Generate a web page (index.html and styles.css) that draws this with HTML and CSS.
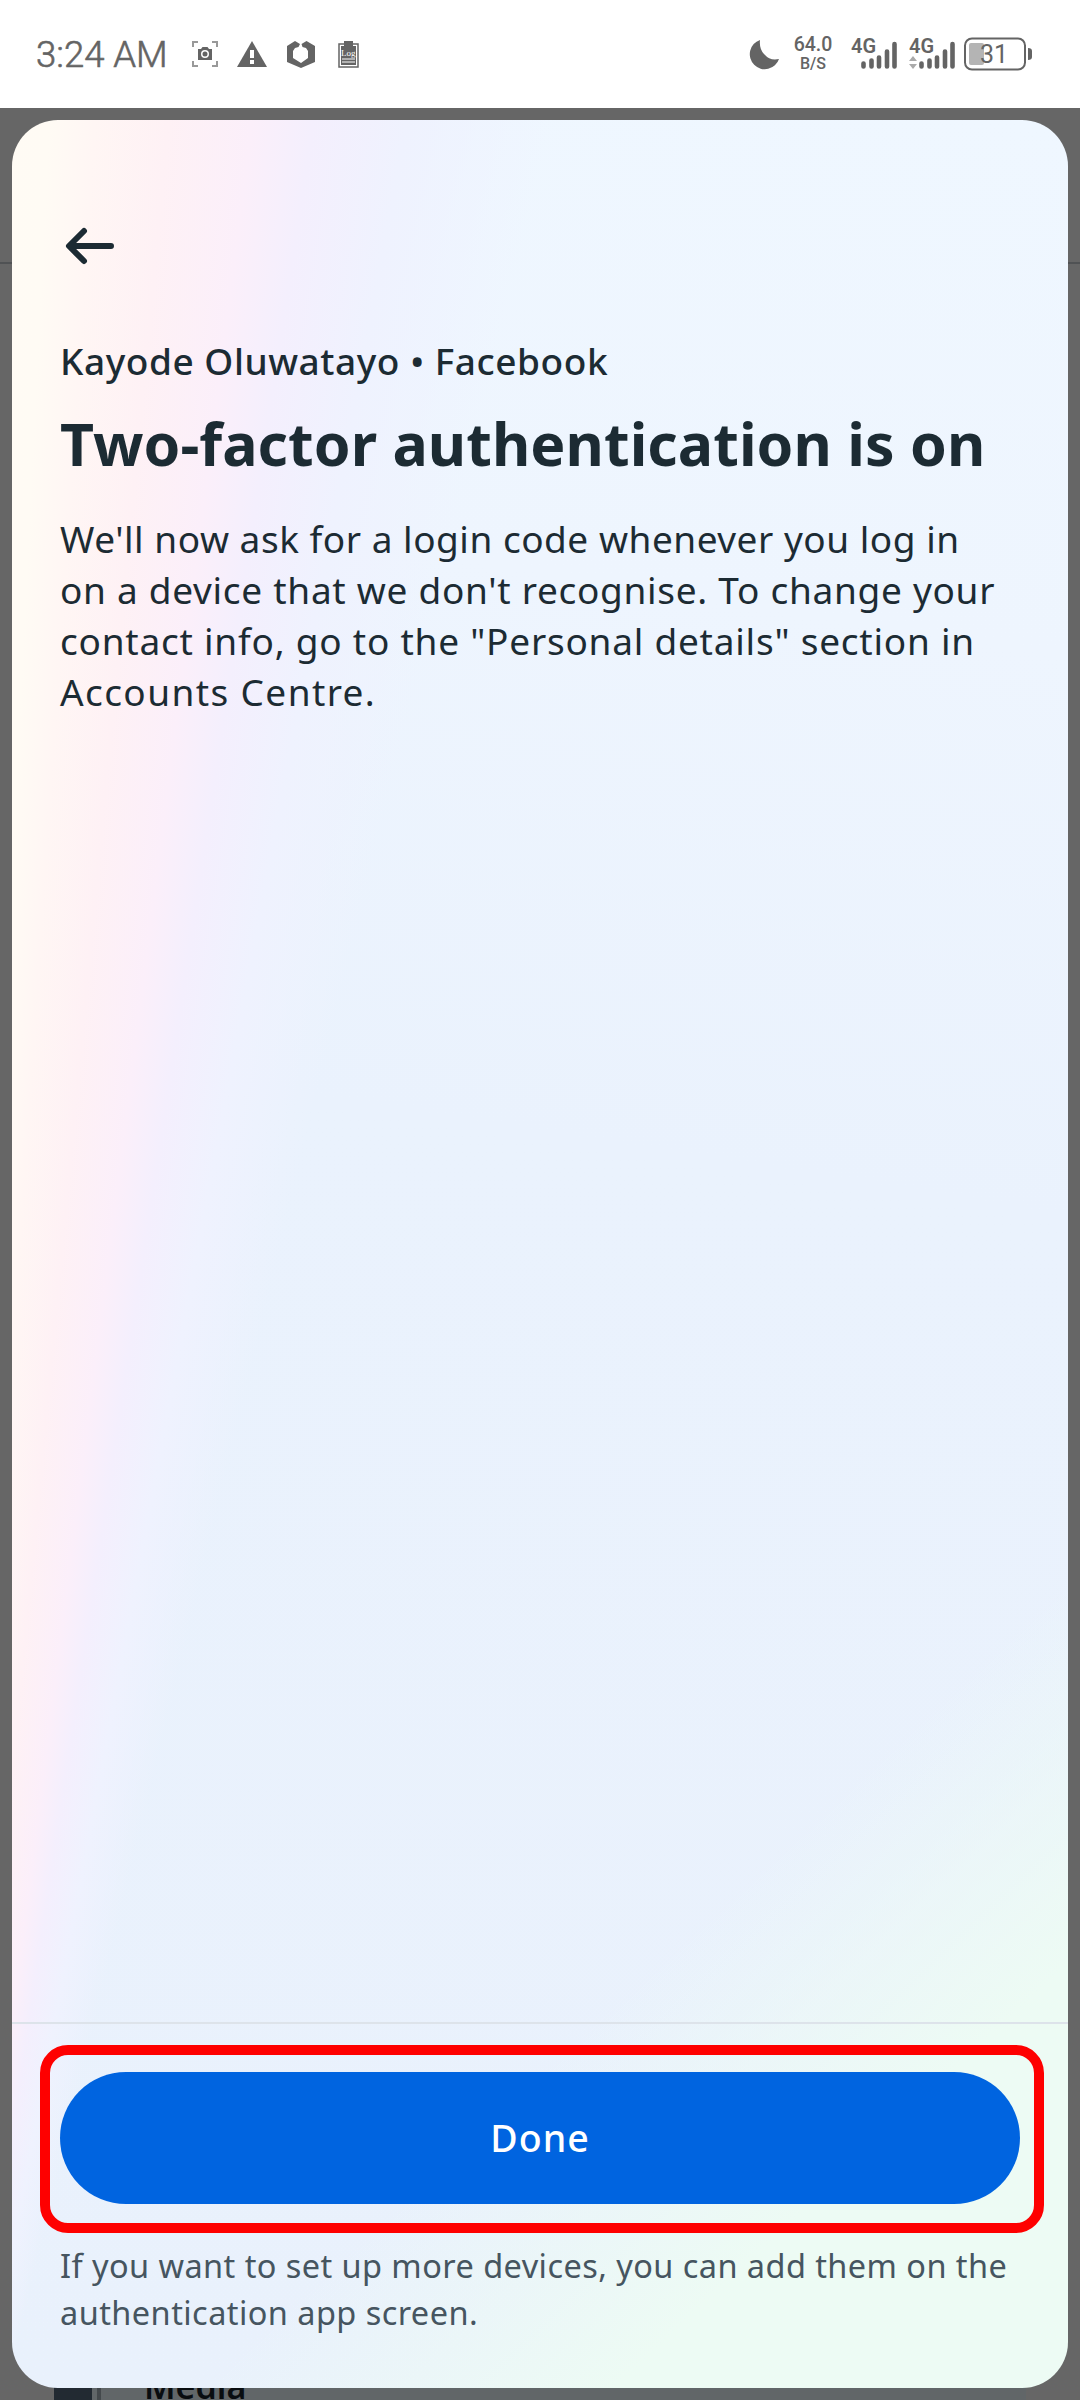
FILE: index.html
```html
<!DOCTYPE html>
<html lang="en-GB">
<head>
<meta charset="utf-8">
<title>Two-factor authentication</title>
<link rel="stylesheet" href="styles.css">
</head>
<body>
<div class="screen">
  <header class="status">
    <div class="status-left">
      <span class="clock">3:24 AM</span>
      <svg class="ic-shot" width="26" height="26" viewBox="0 0 26 26"><path d="M1 6V1h5M20 1h5v5M25 20v5h-5M6 25H1v-5" fill="none" stroke="#999" stroke-width="2"/><path fill-rule="evenodd" d="M6 8h3l1.500-2h5l1.500 2h3v11H6zM13 9a4 4 0 1 0 0 8 4 4 0 0 0 0-8zm0 1.500a2.500 2.500 0 1 1 0 5 2.500 2.500 0 0 1 0-5z" fill="#646464"/></svg>
      <svg class="ic-warn" width="30" height="26" viewBox="0 0 30 26"><path d="M15 0l15 26H0z" fill="#646464"/><path d="M13 9h4v8h-4zM13 19h4v4h-4z" fill="#fff"/></svg>
      <svg class="ic-hex" width="28" height="27" viewBox="0 0 28 27"><path d="M8 0l5 3-1.500 3L8 7l-2 3v7l8 5 7-5v-7l-2-3-3.500-1L14.500 3l5-3L28 5v16l-14 6L0 21V5z" fill="#646464"/></svg>
      <svg class="ic-log" width="21" height="27" viewBox="0 0 21 27"><path d="M1 3h19v23H1z" fill="#fff" stroke="#646464" stroke-width="1.500"/><path d="M3 5h15v19H3zM6 0h9v5H6z" fill="#646464"/><path d="M4 18h13M4 21h13" stroke="#fff"/><text x="3" y="15" class="log-label">Log</text></svg>
    </div>
    <div class="status-right">
      <svg class="ic-moon" width="31" height="31" viewBox="0 0 31 31"><path d="M11 1A15 15 0 1 0 30 20Q21 22 15.500 15.500Q10 10 11 1z" fill="#646464"/></svg>
      <div class="speed"><span class="rate">64.0</span><span class="unit">B/S</span></div>
      <svg class="ic-signal" width="47" height="38" viewBox="0 -4 47 38"><text x="0" y="15.500" class="net">4G</text><path d="M12.500 29.500v-3M20.500 29.500v-6M28 29.500v-9M36 29.500v-15M43.500 29.500V7" stroke="#646464" stroke-width="4.600" stroke-linecap="round"/></svg>
      <svg class="ic-signal-two" width="47" height="38" viewBox="0 -4 47 38"><text x="0" y="15.500" class="net">4G</text><path d="M4 19l4 5H0zM4 32l4-5H0z" fill="#aaa"/><path d="M12.500 29.500v-3M20.500 29.500v-6M28 29.500v-9M36 29.500v-15M43.500 29.500V7" stroke="#646464" stroke-width="4.600" stroke-linecap="round"/></svg>
      <svg class="ic-battery" width="69" height="34" viewBox="0 0 69 34"><rect x="1" y="1.500" width="60" height="31" rx="7" fill="none" stroke="#646464" stroke-width="2"/><rect x="5" y="6" width="15" height="22" rx="2" fill="#b4b4b4"/><path d="M64 11q4 0 4 3v6q0 3-4 3z" fill="#646464"/><text x="16" y="25.500" class="level">31</text></svg>
    </div>
  </header>
  <div class="backdrop">
    <div class="behind-top"></div>
    <div class="behind-row"><span class="thumb"></span><span class="thumb-edge"></span><span class="behind-text">Media</span></div>
    <main class="sheet">
      <section class="content">
        <svg class="back" width="50" height="38" viewBox="0 0 50 38"><path d="M46 19H5M19 4L4 19l15 15" fill="none" stroke="#1c2b33" stroke-width="6" stroke-linecap="round" stroke-linejoin="round"/></svg>
        <p class="account">Kayode Oluwatayo • Facebook</p>
        <h1 class="title">Two-factor authentication is on</h1>
        <p class="body">
          <span class="line b1">We'll now ask for a login code whenever you log in</span>
          <span class="line b2">on a device that we don't recognise. To change your</span>
          <span class="line b3">contact info, go to the "Personal details" section in</span>
          <span class="line b4">Accounts Centre.</span>
        </p>
      </section>
      <footer class="actions">
        <div class="highlight"><button class="done">Done</button></div>
        <p class="note">
          <span class="line n1">If you want to set up more devices, you can add them on the</span>
          <span class="line n2">authentication app screen.</span>
        </p>
      </footer>
    </main>
  </div>
</div>
</body>
</html>
```
FILE: styles.css
```css
* { box-sizing: border-box; }
body { margin: 0; font-family: "Noto Sans", sans-serif; color: #1c2b33; }
p, h1 { margin: 0; white-space: nowrap; }
svg { display: block; flex: none; }
.screen { width: 1080px; height: 2400px; display: flex; flex-direction: column; overflow: hidden; }

.status { height: 108px; flex: none; display: flex; justify-content: space-between; padding: 0 47px 0 36px; background: #fff; color: #646464; font-family: Roboto, sans-serif; }
.status-left, .status-right { display: flex; align-items: center; }
.clock { font-size: 36.500px; font-weight: 300; -webkit-text-stroke: 0.6px #646464; line-height: 42px; padding-top: 2px; width: 156px; white-space: nowrap; }
.ic-warn { margin-left: 19px; }
.ic-hex { margin-left: 20px; }
.ic-log { margin-left: 23px; }
.log-label { font: 9px "Liberation Serif", serif; fill: #fff; }
.speed { width: 40px; margin: 0 18px 0 13px; display: flex; flex-direction: column; align-items: center; }
.rate { font-size: 19.500px; font-weight: 500; line-height: 20px; }
.unit { font-size: 16px; font-weight: 500; line-height: 18px; }
.net { font: 600 20px Roboto, sans-serif; fill: #646464; }
.ic-signal, .ic-signal-two { margin-top: -4px; }
.ic-signal-two { margin-left: 11px; margin-right: 8px; }
.level { font: 25px Roboto, sans-serif; fill: #646464; }

.backdrop { position: relative; flex: 1; background: #666; padding: 12px; }
.behind-top { position: absolute; left: 0; right: 0; top: 0; height: 156px; border-bottom: 2px solid #505254; }
.behind-row { position: absolute; left: 54px; bottom: 0; height: 14px; width: 972px; display: flex; background: #616668; overflow: hidden; }
.thumb { width: 38px; background: #222a32; }
.thumb-edge { width: 4px; margin-left: 5px; background: #44494c; }
.behind-text { margin: -20px 0 0 43px; font-size: 34px; line-height: 40px; font-weight: 600; color: #090d10; }

.sheet {
  position: relative; height: 2268px; border-radius: 46px; display: flex; flex-direction: column; justify-content: space-between; overflow: hidden;
  background:
    conic-gradient(from 0deg at -92px 2630px, #fffcf4 0deg, #fffbf4 2.8deg, #fff6f4 3.8deg, #fef1f5 5.4deg, #fbeffa 7.2deg, #f4effd 8.5deg, #eff2fe 10.5deg, rgba(237, 244, 254, 0) 13.5deg),
    linear-gradient(137deg, rgba(236, 251, 243, 0) 75%, #edfbf4 87%),
    linear-gradient(189deg, #eff7ff 0%, #eef5fe 22%, #eaf2fd 45%, #e9f1fc 100%);
}
.content { padding: 107px 48px 0; }
.back { margin-left: 5px; }
.account { margin-top: 70px; font-size: 37px; line-height: 51px; font-weight: 500; letter-spacing: 0.550px; }
.title { margin-top: 18px; font-size: 59px; line-height: 78px; font-weight: 700; letter-spacing: 0.050px; }
.body { margin-top: 31px; font-size: 37px; line-height: 51px; }
.line { display: block; width: max-content; }
.b1 { letter-spacing: 0.520px; }
.b2 { letter-spacing: 0.710px; }
.b3 { letter-spacing: 0.770px; }
.b4 { letter-spacing: 1.400px; }

.actions { height: 366px; border-top: 2px solid #dde3ea; padding: 21px 24px 0 28px; }
.highlight { height: 188px; padding: 17px 14px 19px 10px; border: 10px solid #fe0000; border-radius: 28px; }
.done { display: block; width: 100%; height: 132px; padding: 0; border: 0; border-radius: 66px; background: #0064e0; color: #fff; font: 500 37.500px/132px "Noto Sans", sans-serif; letter-spacing: 1px; }
.note { margin: 9px 0 0 20px; font-size: 32.500px; line-height: 47px; letter-spacing: 0.430px; color: #465560; }
```
